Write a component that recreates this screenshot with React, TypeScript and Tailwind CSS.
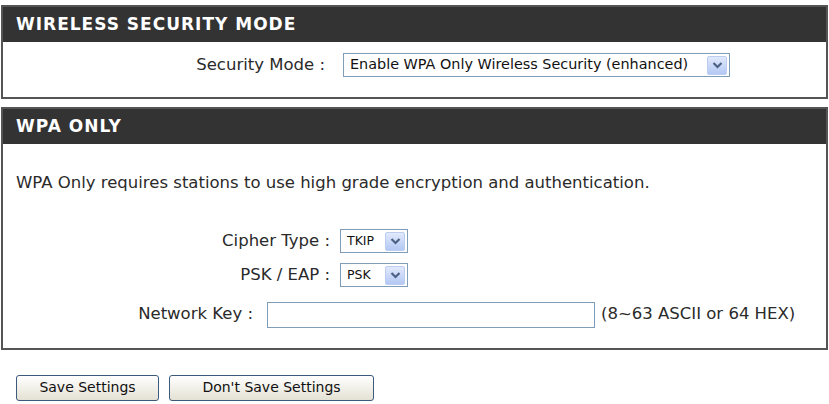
import React from "react";

const FONT = { fontFamily: '"DejaVu Sans", Verdana, sans-serif' };

function Arrow() {
  return (
    <span className="ml-auto mr-[2px] flex h-[19px] w-[20px] items-center justify-center rounded-[2px] border border-[#bccdf2] bg-gradient-to-b from-[#e1e9fc] to-[#b4c8f4]">
      <svg width="11" height="8" viewBox="0 0 11 8">
        <path d="M1.5 2 L5.5 6 L9.5 2" fill="none" stroke="#4d6185" strokeWidth="2.2" />
      </svg>
    </span>
  );
}

function FakeSelect({ value, className, textClass }: { value: string; className: string; textClass: string }) {
  return (
    <div className={"flex items-center border border-[#7f9db9] bg-white pl-[6px] " + className}>
      <span className={"whitespace-nowrap text-[#111] " + textClass}>{value}</span>
      <Arrow />
    </div>
  );
}

function PanelHeader({ title }: { title: string }) {
  return (
    <div className="flex h-[35px] items-center bg-[#333333] px-[13px]">
      <span className="text-[17px] font-bold tracking-[1px] text-white">{title}</span>
    </div>
  );
}

export default function App() {
  return (
    <div className="h-[404px] w-[829px] bg-white px-[1px] pt-[5px] text-[#2a2a2a]" style={FONT}>
      {/* Wireless security mode */}
      <div className="border-2 border-[#555555]">
        <PanelHeader title="WIRELESS SECURITY MODE" />
        <div className="h-[55px] pt-[11px]">
          <div className="flex h-[24px] items-center">
            <div className="w-[322px] text-right text-[16.5px]">Security Mode :</div>
            <FakeSelect
              value="Enable WPA Only Wireless Security (enhanced)"
              className="ml-[18px] h-[24px] w-[387px]"
              textClass="text-[14.4px]"
            />
          </div>
        </div>
      </div>

      {/* WPA only */}
      <div className="mt-[8px] border-2 border-[#555555]">
        <PanelHeader title="WPA ONLY" />
        <div className="pb-[20px] pt-[29px]">
          <p className="h-[20px] pl-[13px] text-[16.5px] leading-[20px]">
            WPA Only requires stations to use high grade encryption and authentication.
          </p>
          <div className="mt-[36px] grid grid-cols-[327px_1fr] items-center gap-y-[9px]">
            <div className="text-right text-[16.5px]">Cipher Type :</div>
            <FakeSelect value="TKIP" className="ml-[10px] h-[24px] w-[68px]" textClass="text-[12.5px]" />
            <div className="text-right text-[16.5px]">PSK / EAP :</div>
            <FakeSelect value="PSK" className="ml-[10px] h-[24px] w-[68px]" textClass="text-[12.5px]" />
          </div>
          <div className="mt-[14px] flex h-[26px] items-center">
            <div className="w-[250px] text-right text-[16.5px]">Network Key :</div>
            <input
              type="text"
              className="ml-[14px] h-[26px] w-[328px] border border-[#7f9db9] bg-white outline-none"
            />
            <span className="ml-[6px] whitespace-nowrap text-[16.5px]">(8~63 ASCII or 64 HEX)</span>
          </div>
        </div>
      </div>

      {/* Buttons */}
      <div className="mt-[25px] flex gap-[10px] pl-[15px]">
        <button className="h-[26px] w-[143px] rounded-[3px] border border-[#3c5a7c] bg-gradient-to-b from-white to-[#e4e1d4] text-[14px] text-[#111]">
          Save Settings
        </button>
        <button className="h-[26px] w-[205px] rounded-[3px] border border-[#3c5a7c] bg-gradient-to-b from-white to-[#e4e1d4] text-[14px] text-[#111]">
          Don't Save Settings
        </button>
      </div>
    </div>
  );
}
